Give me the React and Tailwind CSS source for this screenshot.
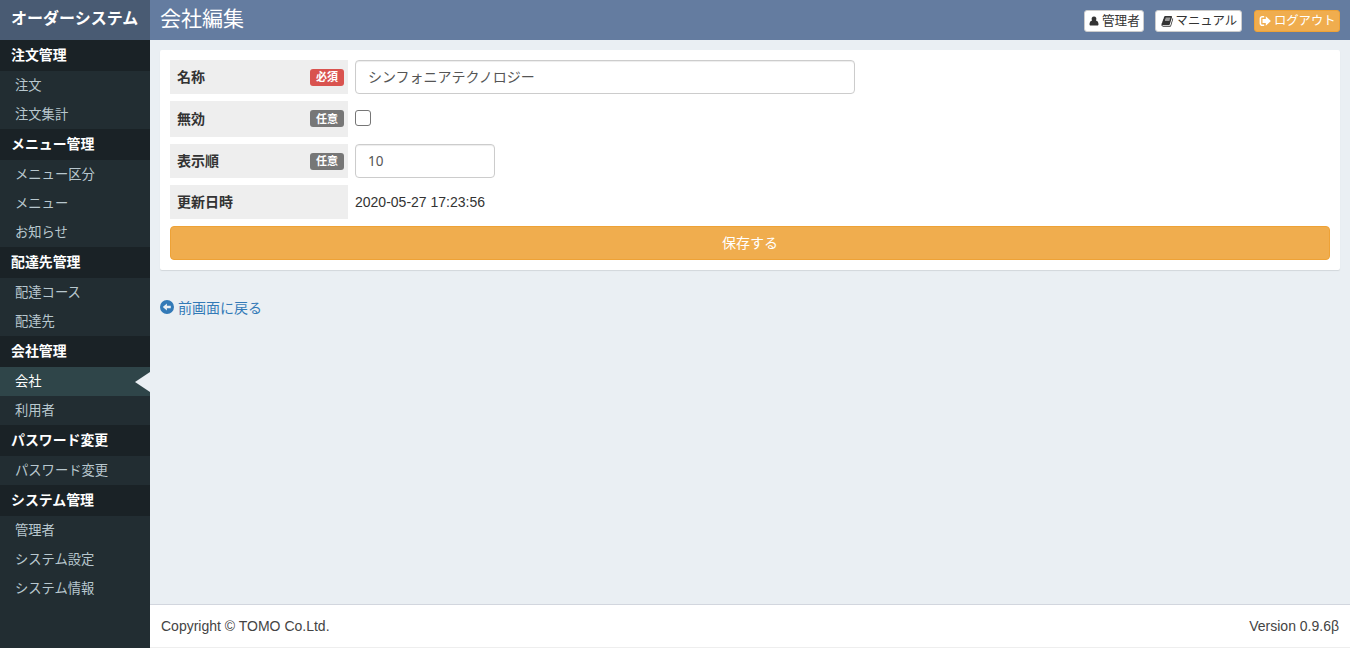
import React from 'react';

const ICONS = {
  user: 'M6 0.5A2.9 3 0 0 1 8.3 5.3C10.4 5.8 11.4 7.4 11.4 9.9C11.4 10.9 10.9 11.5 10 11.5H2C1.1 11.5 0.6 10.9 0.6 9.9C0.6 7.4 1.6 5.8 3.7 5.3A2.9 3 0 0 1 6 0.5Z',
  book: 'M1703 478q40 57 18 129l-275 906q-19 64-76.5 107.5t-122.5 43.5h-923q-77 0-148.5-53.5t-99.5-131.5q-24-67-2-127 0-4 3-27t4-37q1-8-3-21.5t-3-19.5q2-11 8-21t16.5-23.5 16.5-23.5q23-38 45-91.5t30-91.5q3-10 .5-30t-.5-28q3-11 17-28t17-23q21-36 42-92t25-90q1-9-2.5-32t.5-28q4-13 22-30.5t22-22.5q19-26 42.5-84.5t27.5-96.5q1-8-3-25.5t-2-26.5q2-8 9-18t18-23 17-21q8-12 16.5-30.5t15-35 16-36 19.5-32 26.5-23.5 36-11.5 47.5 5.5l-1 3q38-9 51-9h761q74 0 114 56t18 130l-274 906q-36 119-71.5 153.5t-128.5 34.5h-869q-27 0-38 15-11 16-1 43 24 70 144 70h923q29 0 56-15.5t35-41.5l300-987q7-22 5-57 38 15 59 43zm-1064 2q-4 13 2 22.5t20 9.5h608q13 0 25.5-9.5t16.5-22.5l21-64q4-13-2-22.5t-20-9.5h-608q-13 0-25.5 9.5t-16.5 22.5zm-83 256q-4 13 2 22.5t20 9.5h608q13 0 25.5-9.5t16.5-22.5l21-64q4-13-2-22.5t-20-9.5h-608q-13 0-25.5 9.5t-16.5 22.5z',
  signOut: 'M5.2 1H3.2C1.7 1 0.6 2.1 0.6 3.6V8.4C0.6 9.9 1.7 11 3.2 11H5.2V9.4H3.2C2.6 9.4 2.2 9 2.2 8.4V3.6C2.2 3 2.6 2.6 3.2 2.6H5.2ZM6.8 1.2L11.9 6L6.8 10.8V8.1H3.5V3.9H6.8Z',
  back: 'M7 0A7 7 0 1 1 7 14A7 7 0 1 1 7 0ZM2.8 7L6.9 10.6V8.3H10.8V5.7H6.9V3.4Z',
};

function Icon({ name, className, viewBox = '0 0 12 12' }) {
  return (
    <svg viewBox={viewBox} fill="currentColor" fillRule="evenodd" className={`shrink-0 ${className}`} aria-hidden="true">
      <path d={ICONS[name]} />
    </svg>
  );
}

const MENU = [
  { title: '注文管理', items: ['注文', '注文集計'] },
  { title: 'メニュー管理', items: ['メニュー区分', 'メニュー', 'お知らせ'] },
  { title: '配達先管理', items: ['配達コース', '配達先'] },
  { title: '会社管理', items: ['会社', '利用者'] },
  { title: 'パスワード変更', items: ['パスワード変更'] },
  { title: 'システム管理', items: ['管理者', 'システム設定', 'システム情報'] },
];

function Sidebar() {
  return (
    <aside className="flex w-[150px] shrink-0 flex-col bg-[#222d32]">
      <div className="flex h-10 items-center bg-[#495b73] pl-[11px] text-base font-bold whitespace-nowrap text-white">
        <span className="-mt-0.5">オーダーシステム</span>
      </div>
      {MENU.map((group) => (
        <div key={group.title}>
          <h2 className="flex h-[31px] items-center bg-[#1a2226] pb-0.5 pl-[11px] text-[13.9px] font-bold text-white">{group.title}</h2>
          {group.items.map((item) => {
            const active = item === '会社';
            return (
              <a
                key={item}
                className={`flex h-[29px] items-center justify-between pl-[15px] text-[13.3px] ${
                  active ? 'bg-[#2f4549] text-white' : 'text-[#b8c7ce]'
                }`}
              >
                {item}
                {active && (
                  <span className="mt-px h-0 w-0 border-y-[10px] border-r-[15px] border-y-transparent border-r-[#eaeff3]" />
                )}
              </a>
            );
          })}
        </div>
      ))}
    </aside>
  );
}

function Field({ label, badge, badgeClass, height, children }) {
  return (
    <div className={`flex gap-[7px] ${height}`}>
      <div className="flex w-[178px] items-center justify-between bg-[#eee] pr-1 pl-[7px] font-bold">
        <span className="-mt-px">{label}</span>
        {badge && (
          <span className={`flex h-[17px] w-[34px] items-center justify-center rounded-[3px] text-[11px] text-white ${badgeClass}`}>
            {badge}
          </span>
        )}
      </div>
      {children}
    </div>
  );
}

const INPUT = 'h-[34px] rounded border border-[#ccc] bg-white px-3 text-sm text-[#555] shadow-[inset_0_1px_1px_rgba(0,0,0,0.075)] outline-none';
const BUTTON = 'flex h-[22px] items-center rounded-[3px] border whitespace-nowrap';

export default function App() {
  return (
    <div className="flex h-[648px] w-full overflow-hidden bg-[#eaeff3] font-['Liberation_Sans','Noto_Sans_CJK_JP',sans-serif] text-sm leading-5 text-[#333]">
      <Sidebar />
      <div className="flex min-w-0 flex-1 flex-col">
        <header className="flex h-10 shrink-0 items-center justify-between bg-[#647ca0] px-2.5 text-white">
          <h1 className="-mt-0.5 text-[21px]">会社編集</h1>
          <div className="mt-0.5 flex">
            <button className={`${BUTTON} mr-[11px] w-[60px] gap-[3px] border-[#ccc] bg-white pl-1 text-[12.6px] text-[#333]`}>
              <Icon name="user" className="size-2.5" />
              <span>管理者</span>
            </button>
            <button className={`${BUTTON} mr-3 w-[87px] gap-[2px] border-[#ccc] bg-white pl-[5px] text-[12.4px] text-[#333]`}>
              <Icon name="book" className="size-[12.6px]" viewBox="0 0 1792 1792" />
              <span>マニュアル</span>
            </button>
            <button className={`${BUTTON} w-[86px] gap-[3px] border-[#eea236] bg-[#f0ad4e] pl-1 text-[12.3px] text-white`}>
              <Icon name="signOut" className="size-3" />
              <span>ログアウト</span>
            </button>
          </div>
        </header>
        <main className="flex-1 p-2.5">
          <section className="flex h-[220px] flex-col gap-[7px] rounded-[2px] bg-white p-2.5 shadow-[0_1px_1px_rgba(0,0,0,0.1)]">
            <Field label="名称" badge="必須" badgeClass="bg-[#d9534f]" height="h-[34px]">
              <input className={`${INPUT} w-[500px] pb-0.5`} defaultValue="シンフォニアテクノロジー" />
            </Field>
            <Field label="無効" badge="任意" badgeClass="bg-[#777] -mt-px" height="h-9">
              <span className="mt-[9px] size-4 rounded-[3px] border border-[#767676] bg-white" role="checkbox" aria-checked="false" />
            </Field>
            <Field label="表示順" badge="任意" badgeClass="bg-[#777]" height="h-[34px]">
              <input className={`${INPUT} w-[140px] font-['Noto_Sans',sans-serif] text-[13.5px]`} defaultValue="10" />
            </Field>
            <Field label="更新日時" height="h-[34px]">
              <span className="self-center">2020-05-27 17:23:56</span>
            </Field>
            <button className="h-[34px] shrink-0 rounded border border-[#eea236] bg-[#f0ad4e] text-sm text-white">保存する</button>
          </section>
          <a className="mt-[27px] flex items-center gap-1 text-[#337ab7]">
            <Icon name="back" className="mb-px size-3.5" viewBox="0 0 14 14" />
            <span className="mt-px">前画面に戻る</span>
          </a>
        </main>
        <footer className="flex h-11 shrink-0 items-center justify-between border-y border-t-[#d2d6de] border-b-[#eee] bg-white px-[11px] pb-px text-[#444]">
          <span>Copyright © TOMO Co.Ltd.</span>
          <span>Version 0.9.6β</span>
        </footer>
      </div>
    </div>
  );
}
